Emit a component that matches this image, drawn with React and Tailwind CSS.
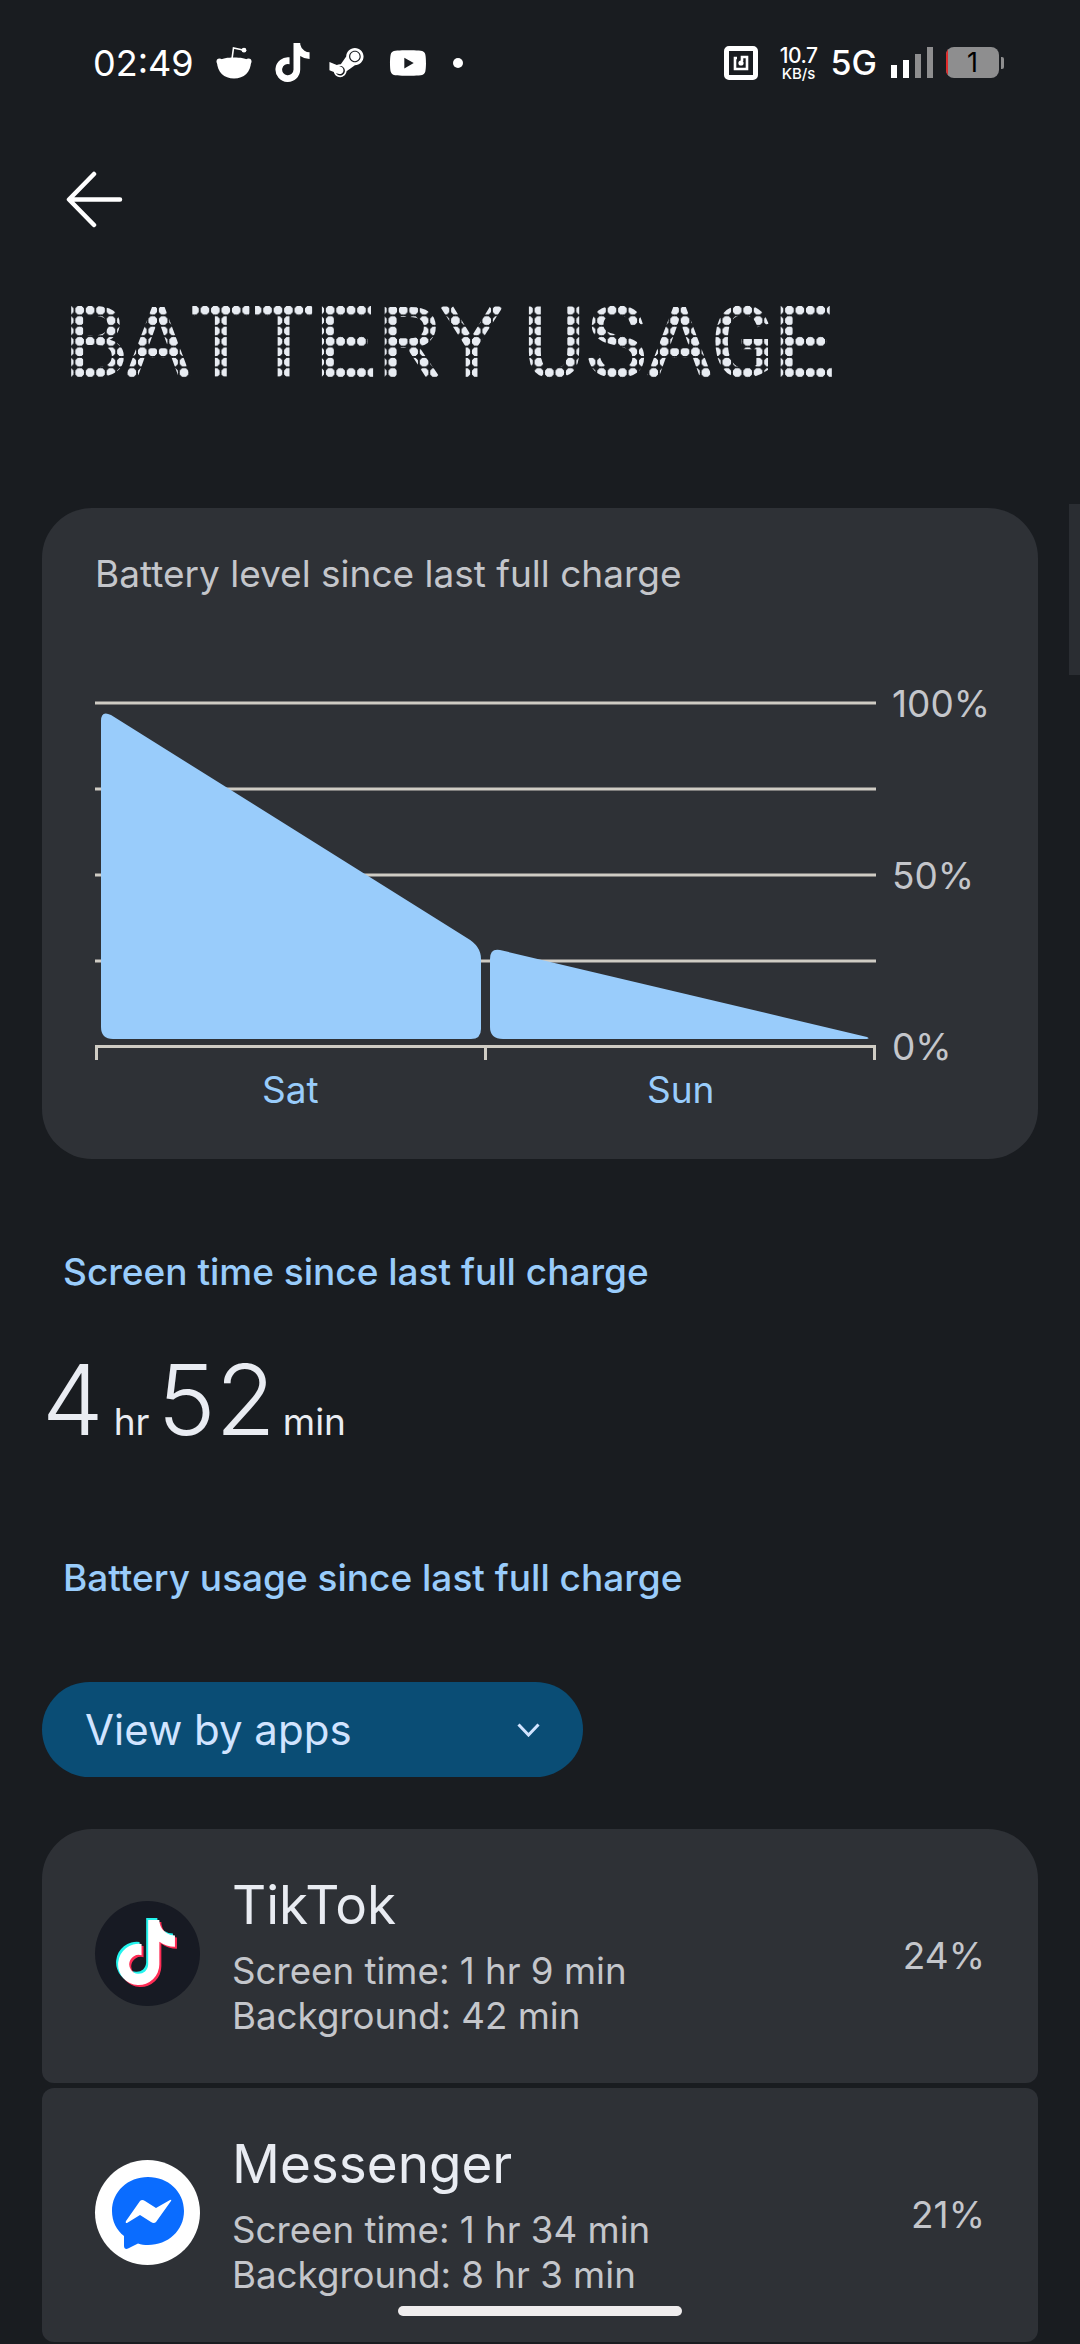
import { FaTiktok, FaSteamSymbol, FaYoutube } from 'react-icons/fa';

const inter = "font-['Inter','Noto_Sans',sans-serif]";

function RedditMark({ className }) {
  return (
    <svg className={className} viewBox="0 0 36 33" fill="none">
      <path d="M16 13 L17.5 2 L27 4" stroke="currentColor" strokeWidth="1.6" />
      <circle cx="28" cy="4.2" r="2.4" fill="currentColor" />
      <circle cx="3.5" cy="15.5" r="3" fill="currentColor" />
      <circle cx="32.5" cy="15.5" r="3" fill="currentColor" />
      <path d="M1 15.5 C6 12 12 11.5 18 11.5 C24 11.5 30 12 35 15.5 C35 26 28 32.5 18 32.5 C8 32.5 1 26 1 15.5 Z" fill="currentColor" />
    </svg>
  );
}

function NfcMark({ className }) {
  return (
    <svg className={className} viewBox="0 0 34 34" fill="none">
      <rect x="2.5" y="2.5" width="29" height="29" rx="2.5" stroke="currentColor" strokeWidth="5" />
      <path d="M13 12 H11 V23 H23 V11 H18 V15" stroke="currentColor" strokeWidth="2.6" />
      <circle cx="17" cy="17" r="2.6" fill="currentColor" />
    </svg>
  );
}

function StatusBar() {
  return (
    <div className={`flex h-[125px] items-center pl-[93px] pr-[76px] text-white ${inter}`}>
      <span className="w-[123px] text-[36px] font-normal leading-none">02:49</span>
      <RedditMark className="h-[33px] w-[36px]" />
      <FaTiktok className="ml-[23px] h-[39px] w-[35px]" />
      <FaSteamSymbol className="ml-[19px] h-[39px] w-[35px]" />
      <FaYoutube className="ml-[25px] h-[40px] w-[38px]" />
      <span className="ml-[26px] size-[10px] rounded-full bg-white" />
      <div className="ml-auto flex items-center">
        <NfcMark className="size-[34px]" />
        <div className="ml-[21px] flex w-[40px] flex-col items-center font-medium">
          <span className="text-[21px] leading-[21px] tracking-tight">10.7</span>
          <span className="text-[15px] leading-[15px]">KB/s</span>
        </div>
        <span className="ml-[12px] text-[34px] font-medium leading-none">5G</span>
        <div className="ml-[14px] flex h-[31px] items-end gap-[6px]">
          <span className="h-[13px] w-[6px] bg-white" />
          <span className="h-[18px] w-[6px] bg-white" />
          <span className="h-[24px] w-[6px] bg-[#8e8e8f]" />
          <span className="h-[31px] w-[6px] bg-[#8e8e8f]" />
        </div>
        <div className="relative ml-[13px] flex h-[31px] w-[53px] items-center justify-center overflow-hidden rounded-[8px] bg-[#8e8e8f] text-[27px] leading-none text-black">
          <span className="absolute inset-y-0 left-0 w-[2px] bg-[#e02b2b]" />
          1
        </div>
        <span className="ml-[2px] h-[12px] w-[3px] rounded-r-[2px] bg-[#8e8e8f]" />
      </div>
    </div>
  );
}

function BatteryChart() {
  const gridY = [703, 789, 875, 961];
  return (
    <svg className="block h-[360px] w-[783px]" viewBox="0 0 783 360">
      {gridY.map((y) => (
        <rect key={y} x="0" y={y - 702.5} width="781" height="3" fill="#cfccc4" />
      ))}
      <rect x="0" y="344" width="781" height="3" fill="#cfccc4" />
      <rect x="0" y="344" width="3" height="15" fill="#cfccc4" />
      <rect x="389" y="344" width="3" height="15" fill="#cfccc4" />
      <rect x="778" y="344" width="3" height="15" fill="#cfccc4" />
      <path
        d="M6 20 Q6 9 16 14 L372 237 Q386 245 386 258 L386 328 Q386 338 376 338 L18 338 Q6 338 6 326 Z"
        fill="#99ccfb"
      />
      <path
        d="M395 258 Q395 247 405 249 L772 336 Q776 338 770 338 L408 338 Q395 338 395 326 Z"
        fill="#99ccfb"
      />
    </svg>
  );
}

function TikTokIcon() {
  return (
    <div className="relative size-[105px] shrink-0 rounded-full bg-[#171a23]">
      <FaTiktok className="absolute left-[21px] top-[17px] h-[65px] w-[57px] text-[#25f4ee]" />
      <FaTiktok className="absolute left-[25px] top-[21px] h-[65px] w-[57px] text-[#fe2c55]" />
      <FaTiktok className="absolute left-[23px] top-[19px] h-[65px] w-[57px] text-white" />
    </div>
  );
}

function MessengerIcon() {
  return (
    <div className="flex size-[105px] shrink-0 items-center justify-center rounded-full bg-white">
      <svg className="size-[72px]" viewBox="0 0 72 72">
        <path
          d="M36 0 C16 0 0 14.500 0 34 C0 44.500 4.500 53 12 59 L12 69 C12 71.500 14 72.500 16 71.500 L26 66.500 C29 67.500 32.500 68 36 68 C56 68 72 53.500 72 34 C72 14.500 56 0 36 0 Z"
          fill="#0a6cff"
        />
        <path d="M14 44 L28 24 Q30 22 33 24 L44 31 L58 23 Q60 22 59 24 L44 45 Q42 47 39 45 L28 38 L15 46 Q13 46 14 44 Z" fill="#fff" />
      </svg>
    </div>
  );
}

function AppRow({ icon, name, screen, background, percent, className }) {
  return (
    <div className={`flex h-[254px] items-center bg-[#2e3136] pl-[53px] pr-[53px] ${className}`}>
      <div className="-mt-[5px]">{icon}</div>
      <div className="ml-[32px] flex-1">
        <div className="text-[53px] leading-[60px] text-[#e9ecf2]">{name}</div>
        <div className="mt-[13px] text-[36.7px] leading-[45px] text-[#c4c6cb]">
          <div>{screen}</div>
          <div>{background}</div>
        </div>
      </div>
      <span className="-mt-[2px] text-[37px] leading-none text-[#c4c6cb]">{percent}</span>
    </div>
  );
}

export default function App() {
  return (
    <div className={`relative h-[2344px] w-[1080px] overflow-hidden bg-[#191c20] ${inter}`}>
      <StatusBar />

      <svg className="ml-[66px] mt-[46px] block h-[57px] w-[57px]" viewBox="0 0 57 57" fill="none">
        <path d="M4 28.500 H54 M28 3 L3 28.500 L28 54" stroke="#fff" strokeWidth="4.500" strokeLinecap="round" strokeLinejoin="round" />
      </svg>

      <h1 className="mt-[77px] ml-[64px] w-fit bg-[radial-gradient(circle,#e8ecf2_4.2px,transparent_4.8px)] bg-clip-text font-['Liberation_Mono',monospace] text-[104.5px] font-normal leading-[86px] whitespace-pre text-transparent [-webkit-text-stroke:2.2px_transparent] [background-size:10.45px_10.4px] [word-spacing:-43px]">
        BATTERY USAGE
      </h1>

      <section className="mx-[42px] mt-[117px] h-[651px] rounded-[50px] bg-[#2e3136] pl-[53px] pt-[44px]">
        <p className="text-[37px] leading-[44px] text-[#c4c6cb]">Battery level since last full charge</p>
        <div className="relative mt-[105px]">
          <BatteryChart />
          <div className="absolute left-[797px] top-[-19px] text-[37px] leading-[44px] text-[#c4c6cb]">100%</div>
          <div className="absolute left-[797px] top-[153px] text-[37px] leading-[44px] text-[#c4c6cb]">50%</div>
          <div className="absolute left-[797px] top-[324px] text-[37px] leading-[44px] text-[#c4c6cb]">0%</div>
        </div>
        <div className="mt-[7px] grid w-[781px] grid-cols-2 text-center text-[37px] leading-[44px] text-[#99ccfb]">
          <span>Sat</span>
          <span>Sun</span>
        </div>
      </section>

      <p className="ml-[63px] mt-[88px] text-[37px] font-medium leading-[50px] text-[#99ccfb]">Screen time since last full charge</p>

      <div className="ml-[42px] mt-[53px] flex items-baseline text-[#e9ecf2]">
        <span className="text-[98px] font-[350] leading-[100px]">4</span>
        <span className="ml-[10px] text-[37px]">hr</span>
        <span className="ml-[8px] text-[98px] font-[350] leading-[100px]">52</span>
        <span className="ml-[7px] text-[37px]">min</span>
      </div>

      <p className="ml-[63px] mt-[103px] text-[37px] font-medium leading-[50px] text-[#99ccfb]">Battery usage since last full charge</p>

      <div className="ml-[42px] mt-[79px] flex h-[95px] w-[541px] items-center rounded-full bg-[#0a4d75] pl-[43px] pr-[43px] text-[#d1e4ff]">
        <span className="flex-1 text-[42px] leading-none">View by apps</span>
        <svg className="h-[14px] w-[23px]" viewBox="0 0 23 14" fill="none">
          <path d="M1.500 1.500 L11.500 12 L21.500 1.500" stroke="currentColor" strokeWidth="3" />
        </svg>
      </div>

      <div className="mx-[42px] mt-[52px] flex flex-col gap-[5px]">
        <AppRow
          className="rounded-t-[50px] rounded-b-[12px]"
          icon={<TikTokIcon />}
          name="TikTok"
          screen="Screen time: 1 hr 9 min"
          background="Background: 42 min"
          percent="24%"
        />
        <AppRow
          className="rounded-[12px]"
          icon={<MessengerIcon />}
          name="Messenger"
          screen="Screen time: 1 hr 34 min"
          background="Background: 8 hr 3 min"
          percent="21%"
        />
      </div>

      {/* scrollbar thumb */}
      <div className="absolute right-0 top-[504px] h-[171px] w-[11px] bg-[#2a2d32]" />
      <div className="absolute bottom-[28px] left-[398px] h-[10px] w-[284px] rounded-full bg-[#efedee]" />
    </div>
  );
}
